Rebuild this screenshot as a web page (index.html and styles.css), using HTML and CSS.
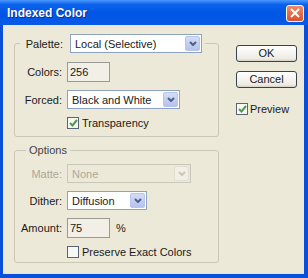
FILE: index.html
```html
<!DOCTYPE html>
<html lang="en">
<head>
  <meta charset="UTF-8" />
  <title>Indexed Color</title>
  <link rel="stylesheet" href="styles.css">
</head>
<body>
  <div class="window">
    <div class="titlebar">
      <span class="title">Indexed Color</span>
      <span class="close">
        <svg width="10" height="10" viewBox="0 0 10 10"><path d="M1 1L9 9M9 1L1 9" stroke="#fff" stroke-width="2"/></svg>
      </span>
    </div>

    <div class="content">
      <div class="left">
        <fieldset class="group palette">
          <legend>
            <span class="lbl">Palette:</span>
            <span class="select w-palette">Local (Selective)<span class="arrow"><svg width="8" height="5" viewBox="0 0 8 5"><path d="M1 1L4 4L7 1" stroke="#4d6185" stroke-width="2" fill="none"/></svg></span></span>
          </legend>
          <div class="row">
            <span class="lbl">Colors:</span>
            <span class="field">256</span>
          </div>
          <div class="row">
            <span class="lbl">Forced:</span>
            <span class="select w-forced">Black and White<span class="arrow"><svg width="8" height="5" viewBox="0 0 8 5"><path d="M1 1L4 4L7 1" stroke="#4d6185" stroke-width="2" fill="none"/></svg></span></span>
          </div>
          <div class="row check-row">
            <span class="box checked"><svg width="9" height="8" viewBox="0 0 9 8"><path d="M1 4L3.5 6.5L8 1" stroke="#4f9a4f" stroke-width="2" fill="none"/></svg></span>
            <span>Transparency</span>
          </div>
        </fieldset>

        <fieldset class="group options">
          <legend>Options</legend>
          <div class="row">
            <span class="lbl disabled">Matte:</span>
            <span class="select w-matte off">None<span class="arrow"><svg width="8" height="5" viewBox="0 0 8 5"><path d="M1 1L4 4L7 1" stroke="#c9c7ba" stroke-width="2" fill="none"/></svg></span></span>
          </div>
          <div class="row">
            <span class="lbl">Dither:</span>
            <span class="select w-dither">Diffusion<span class="arrow"><svg width="8" height="5" viewBox="0 0 8 5"><path d="M1 1L4 4L7 1" stroke="#4d6185" stroke-width="2" fill="none"/></svg></span></span>
          </div>
          <div class="row">
            <span class="lbl">Amount:</span>
            <span class="field">75</span>
            <span class="unit">%</span>
          </div>
          <div class="row check-row">
            <span class="box"></span>
            <span>Preserve Exact Colors</span>
          </div>
        </fieldset>
      </div>

      <div class="right">
        <div class="btn">OK</div>
        <div class="btn">Cancel</div>
        <div class="preview">
          <span class="box checked"><svg width="9" height="8" viewBox="0 0 9 8"><path d="M1 4L3.5 6.5L8 1" stroke="#4f9a4f" stroke-width="2" fill="none"/></svg></span>
          <span>Preview</span>
        </div>
      </div>
    </div>
  </div>
</body>
</html>
```

FILE: styles.css
```css
body {
  margin: 0;
  font-family: "Liberation Sans", Arial, sans-serif;
  font-size: 11px;
  color: #1a1a1a;
}

.window {
  width: 308px;
  height: 278px;
  box-sizing: border-box;
  display: flex;
  flex-direction: column;
  background: #0a4fd9;
}

.titlebar {
  height: 25px;
  display: flex;
  align-items: center;
  justify-content: space-between;
  padding: 0 4px 0 7px;
  background: linear-gradient(#4a98ff 0%, #0b63ec 18%, #0055e3 55%, #0a5ae8 100%);
}

.title {
  color: #fff;
  font-weight: bold;
  font-size: 12px;
  text-shadow: 1px 1px 0 #0a2c8f;
  margin-top: 1px;
}

.close {
  width: 18px;
  height: 17px;
  box-sizing: border-box;
  border: 1px solid #fff;
  border-radius: 3px;
  background: linear-gradient(#f08a66, #d9522a);
  display: flex;
  align-items: center;
  justify-content: center;
  margin-top: 1px;
}

.content {
  flex: 1;
  display: flex;
  gap: 17px;
  margin: 0 4px 4px 3px;
  padding: 9px 0 0 11px;
  background: #ece9d8;
  border-bottom: 1px solid #d6e3fa;
}

.left {
  width: 205px;
  display: flex;
  flex-direction: column;
  gap: 7px;
}

.group {
  margin: 0;
  padding: 0;
  border: 1px solid #c9c7b8;
  border-radius: 3px;
  display: flex;
  flex-direction: column;
  gap: 8px;
  min-width: 0;
}

.palette {
  padding: 9px 0 7px 0;
}

.palette legend {
  margin-left: 5px;
  padding: 0 3px;
  display: flex;
  align-items: center;
  gap: 7px;
}

.palette legend .lbl {
  width: 40px;
}

.options {
  padding: 7px 0 4px 0;
}

.options legend {
  margin-left: 11px;
  padding: 0 3px;
  line-height: 13px;
  color: #444;
}

.row {
  display: flex;
  align-items: center;
  gap: 5px;
}

.lbl {
  width: 47px;
  text-align: right;
  white-space: nowrap;
}

.lbl.disabled {
  color: #aca899;
}

.field {
  width: 43px;
  height: 20px;
  box-sizing: border-box;
  border: 1px solid #9a9a96;
  background: #f1efe6;
  padding-left: 2px;
  line-height: 18px;
}

.unit {
  margin-left: 1px;
}

.select {
  height: 19px;
  box-sizing: border-box;
  border: 1px solid #8ea3bf;
  background: #fff;
  display: flex;
  align-items: center;
  justify-content: space-between;
  padding: 1px 1px 1px 4px;
}

.select .arrow {
  width: 15px;
  height: 15px;
  box-sizing: border-box;
  border: 1px solid #b8c4ec;
  border-radius: 2px;
  background: linear-gradient(#d4dcf8, #b6c2ee);
  display: flex;
  align-items: center;
  justify-content: center;
}

.select.off {
  border-color: #c9c7ba;
  background: #ece9d8;
  color: #aca899;
}

.select.off .arrow {
  border-color: #e0ded3;
  background: #f1efe6;
}

.w-palette { width: 132px; }
.w-forced { width: 113px; }
.w-matte { width: 124px; }
.w-dither { width: 80px; }

.check-row {
  padding-left: 52px;
  gap: 3px;
}

.box {
  width: 12px;
  height: 12px;
  box-sizing: border-box;
  border: 1px solid #5a6478;
  background: #f6f6f2;
  display: flex;
  align-items: center;
  justify-content: center;
}

.right {
  width: 61px;
  padding-top: 11px;
  display: flex;
  flex-direction: column;
}

.btn {
  height: 17px;
  box-sizing: border-box;
  border: 1px solid #3b4150;
  border-radius: 3px;
  background: linear-gradient(#ffffff, #ecebe3 85%, #d6d0c5);
  text-align: center;
  line-height: 15px;
  margin-bottom: 9px;
}

.preview {
  display: flex;
  align-items: center;
  gap: 2px;
  margin-top: 6px;
}
```
